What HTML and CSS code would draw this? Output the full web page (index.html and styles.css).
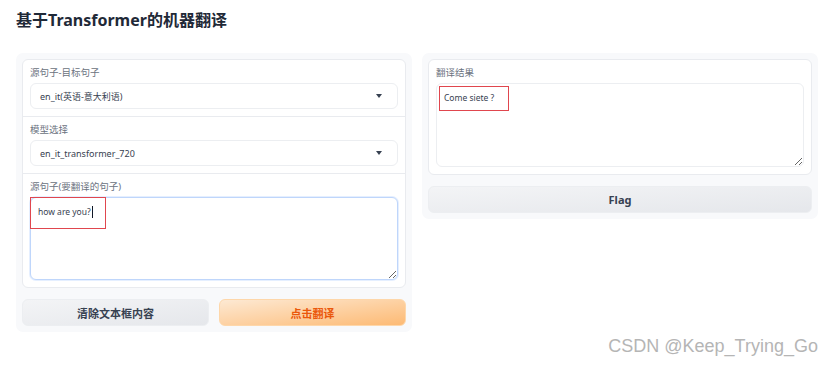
FILE: index.html
```html
<!DOCTYPE html>
<html lang="zh">
<head>
  <meta charset="UTF-8" />
  <meta name="viewport" content="width=device-width, initial-scale=1.0"/>
  <title>基于Transformer的机器翻译</title>
  <link rel="stylesheet" href="styles.css">
</head>
<body>

  <h2 class="judul">基于Transformer的机器翻译</h2>

  <div class="baris">
    <!-- kolom kiri: input -->
    <div class="panel">
      <div class="kartu">
        <div class="blok">
          <label class="label">源句子-目标句子</label>
          <div class="dropdown">
            <span>en_it(英语-意大利语)</span>
            <span class="panah"></span>
          </div>
        </div>
        <div class="blok">
          <label class="label">模型选择</label>
          <div class="dropdown">
            <span>en_it_transformer_720</span>
            <span class="panah"></span>
          </div>
        </div>
        <div class="blok">
          <label class="label">源句子(要翻译的句子)</label>
          <div class="area-wrap">
            <textarea class="area fokus" readonly>how are you?</textarea>
            <span class="caret"></span>
            <span class="tanda tanda-kiri"></span>
          </div>
        </div>
      </div>
      <div class="tombol-baris">
        <button class="tombol abu">清除文本框内容</button>
        <button class="tombol oranye">点击翻译</button>
      </div>
    </div>

    <!-- kolom kanan: hasil -->
    <div class="panel">
      <div class="kartu">
        <div class="blok">
          <label class="label">翻译结果</label>
          <div class="area-wrap">
            <textarea class="area" readonly>Come siete ?</textarea>
            <span class="tanda tanda-kanan"></span>
          </div>
        </div>
      </div>
      <div class="tombol-baris">
        <button class="tombol abu">Flag</button>
      </div>
    </div>
  </div>

  <p class="watermark">CSDN @Keep_Trying_Go</p>

</body>
</html>
```

FILE: styles.css
```css
body {
  margin: 0;
  padding: 0 13px 0 16px;
  font-family: "Noto Sans", "Noto Sans CJK SC", sans-serif;
  background: #ffffff;
  color: #374151;
}
.judul {
  margin: 0;
  padding-top: 7px;
  height: 46px;
  font-size: 16px;
  font-weight: 700;
  color: #1f2937;
}
.baris {
  display: flex;
  gap: 10px;
  align-items: flex-start;
}
.panel {
  width: 396px;
  padding: 6px;
  box-sizing: border-box;
  background: #f8f9fb;
  border-radius: 7px;
}
.kartu {
  background: #ffffff;
  border: 1px solid #e9ebef;
  border-radius: 6px;
}
.blok {
  padding: 6px 7px 7px 7px;
  border-bottom: 1px solid #e9ebef;
}
.blok:last-child {
  border-bottom: none;
}
.label {
  display: block;
  font-size: 9.5px;
  line-height: 14px;
  color: #6b7280;
  margin-bottom: 3px;
}
.dropdown {
  height: 26px;
  box-sizing: border-box;
  border: 1px solid #eceef1;
  border-radius: 6px;
  padding: 0 9px;
  display: flex;
  align-items: center;
  justify-content: space-between;
  font-size: 9px;
  color: #374151;
}
.panah {
  width: 0;
  height: 0;
  border-left: 3.5px solid transparent;
  border-right: 3.5px solid transparent;
  border-top: 4px solid #374151;
  margin-right: 6px;
}
.area-wrap {
  position: relative;
}
.area {
  display: block;
  width: 100%;
  height: 84px;
  box-sizing: border-box;
  border: 1px solid #eceef1;
  border-radius: 6px;
  padding: 8px 7px;
  font-family: "Noto Sans", "Noto Sans CJK SC", sans-serif;
  font-size: 8.5px;
  color: #374151;
  resize: vertical;
  outline: none;
}
.area.fokus {
  height: 83px;
  border-color: #bfd6fb;
  box-shadow: 0 0 0 1px #e5efff;
}
.caret {
  position: absolute;
  left: 62px;
  top: 9px;
  width: 1px;
  height: 12px;
  background: #111827;
}
.tanda {
  position: absolute;
  border: 1.5px solid #e0464e;
  box-sizing: border-box;
}
.tanda-kiri {
  left: 0;
  top: 0;
  width: 76px;
  height: 32px;
}
.tanda-kanan {
  left: 3px;
  top: 3px;
  width: 70px;
  height: 25px;
}
.tombol-baris {
  display: flex;
  gap: 10px;
  margin-top: 11px;
}
.tombol {
  flex: 1;
  height: 27px;
  border: none;
  border-radius: 6px;
  font-family: "Noto Sans", "Noto Sans CJK SC", sans-serif;
  font-size: 11px;
  font-weight: 700;
  cursor: pointer;
}
.abu {
  background: linear-gradient(to bottom right, #f3f4f6, #e5e7eb);
  color: #374151;
  border: 1px solid #eceef1;
}
.oranye {
  background: linear-gradient(to bottom right, #fde9d3, #fdba74);
  color: #ea580c;
  border: 1px solid #fed7aa;
}
.watermark {
  margin: 4px 0 0 0;
  text-align: right;
  font-family: "Liberation Sans", Arial, sans-serif;
  font-size: 18px;
  color: #b5b5b5;
}
```
